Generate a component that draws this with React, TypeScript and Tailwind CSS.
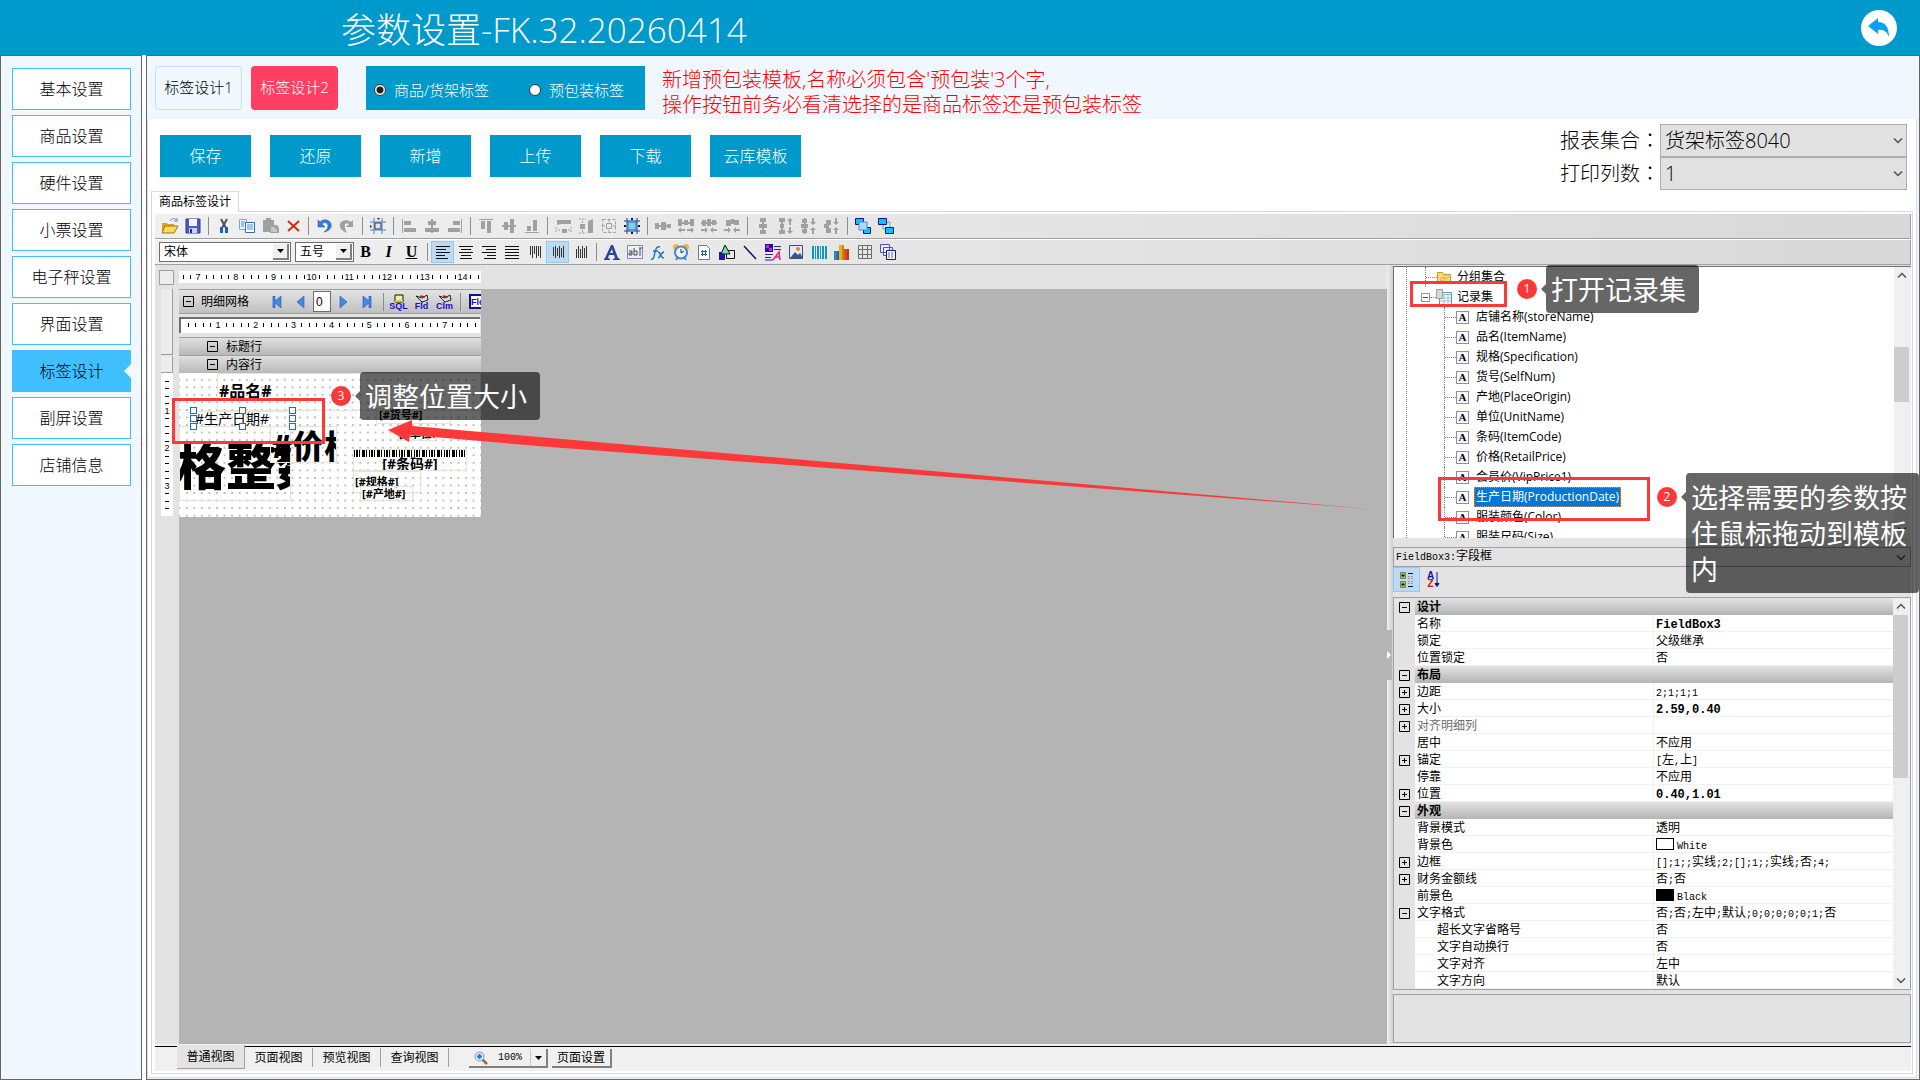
import { useState } from 'react';
import type { ReactNode } from 'react';

const menuItems = [
  '基本设置',
  '商品设置',
  '硬件设置',
  '小票设置',
  '电子秤设置',
  '界面设置',
  '标签设计',
  '副屏设置',
  '店铺信息',
];

const actions = ['保存', '还原', '新增', '上传', '下载', '云库模板'];

const fields = [
  '店铺名称(storeName)',
  '品名(ItemName)',
  '规格(Specification)',
  '货号(SelfNum)',
  '产地(PlaceOrigin)',
  '单位(UnitName)',
  '条码(ItemCode)',
  '价格(RetailPrice)',
  '会员价(VipPrice1)',
  '生产日期(ProductionDate)',
  '服装颜色(Color)',
  '服装尺码(Size)',
];

type Prop = {
  name: string;
  value?: string;
  kind?: 'group' | 'child';
  box?: '+' | '-';
  bold?: boolean;
  muted?: boolean;
  swatch?: 'white' | 'black';
};

const properties: Prop[] = [
  { name: '设计', kind: 'group', box: '-' },
  { name: '名称', value: 'FieldBox3', bold: true },
  { name: '锁定', value: '父级继承' },
  { name: '位置锁定', value: '否' },
  { name: '布局', kind: 'group', box: '-' },
  { name: '边距', value: '2;1;1;1', box: '+' },
  { name: '大小', value: '2.59,0.40', box: '+', bold: true },
  { name: '对齐明细列', value: '', box: '+', muted: true },
  { name: '居中', value: '不应用' },
  { name: '锚定', value: '[左,上]', box: '+' },
  { name: '停靠', value: '不应用' },
  { name: '位置', value: '0.40,1.01', box: '+', bold: true },
  { name: '外观', kind: 'group', box: '-' },
  { name: '背景模式', value: '透明' },
  { name: '背景色', value: 'White', swatch: 'white' },
  { name: '边框', value: '[];1;;实线;2;[];1;;实线;否;4;', box: '+' },
  { name: '财务金额线', value: '否;否', box: '+' },
  { name: '前景色', value: 'Black', swatch: 'black' },
  { name: '文字格式', value: '否;否;左中;默认;0;0;0;0;0;1;否', box: '-' },
  { name: '超长文字省略号', value: '否', kind: 'child' },
  { name: '文字自动换行', value: '否', kind: 'child' },
  { name: '文字对齐', value: '左中', kind: 'child' },
  { name: '文字方向', value: '默认', kind: 'child' },
];

const G = '#a0a0a0';

// 18x18 toolbar glyphs
const icons: Record<string, ReactNode> = {
  open: (
    <>
      <path d="M1 6h5l1 1h6v9H1z" fill="#d9a520" />
      <path d="M1 16l3-7h13l-4 7z" fill="#ffd75e" stroke="#9a7418" />
      <path d="M9 4c2-3 5-3 6-1M16 1v3h-3" fill="none" stroke="#6f7fae" />
    </>
  ),
  save: (
    <>
      <path d="M2 2h14v14H2z" fill="#4a5cc8" stroke="#2c3a94" />
      <path d="M5 2h8v7H5z" fill="#f4f6ff" />
      <path d="M5 11h8v5H5z" fill="#cfd4ee" />
      <path d="M6 12h2v4H6z" fill="#26307c" />
    </>
  ),
  cut: (
    <>
      <path d="M6 2l5 9M12 2L7 11" stroke="#44506a" strokeWidth="2" />
      <path d="M5 10h3v6H5zM10 10h3v6h-3z" fill="#1c5fc0" />
    </>
  ),
  copy: (
    <>
      <path d="M1.500 2.500h7v10h-7z" fill="#eaf3ff" stroke="#7aa8dd" />
      <path d="M7.500 5.500h9v10h-9z" fill="#fff" stroke="#2d6fc0" />
      <path d="M9 8h6M9 10h6M9 12h6M3 5h4M3 7h3M3 9h3" stroke="#4b8ed8" />
    </>
  ),
  paste: (
    <>
      <path d="M2 3h3V1h5v2h3v5h3l2 3v5H9v-1H2z" fill={G} />
      <path d="M10 10h4v2h2v3h-6z" fill="#c8c8c8" />
    </>
  ),
  remove: <path d="M4 4l11 10M15 4L4 14" stroke="#d22a0c" strokeWidth="2" />,
  undo: <path d="M3 3v7h7L7 7c3-3 6-1 6 2s-2 4-4 6c5-1 8-4 7-8S9 1 5 5z" fill="#2f7fdc" stroke="#1c4fa0" strokeWidth=".5" />,
  redo: <path d="M15 3v7H8l3-3C8 5 6 7 7 10c0 2 1 4 2 6C4 14 1 11 2 7s7-5 11-2z" fill={G} />,
  frame: (
    <>
      <path d="M5 1v16M13 1v16M1 5h16M1 13h16" stroke="#4a83c4" />
      <path d="M6 6h6v6H6z" fill="#dce6f2" stroke="#303a55" />
      <path d="M8 1h3L9.500 3zM1 8l2 1.500L1 11z" fill="#222" />
    </>
  ),
  alignL: <path d="M2 2h1v14H2zM4 4h7v4H4zM4 11h12v4H4z" fill={G} />,
  alignC: <path d="M8 2h2v14H8zM5 4h8v4H5zM2 11h14v4H2z" fill={G} />,
  alignR: <path d="M15 2h1v14h-1zM7 4h7v4H7zM2 11h12v4H2z" fill={G} />,
  alignT: <path d="M2 2h14v1H2zM4 4h4v8H4zM10 4h4v12h-4z" fill={G} />,
  alignM: <path d="M2 8h14v2H2zM4 5h4v8H4zM10 2h4v14h-4z" fill={G} />,
  alignB: <path d="M2 15h14v1H2zM4 9h4v5H4zM10 3h4v11h-4z" fill={G} />,
  sameW: (
    <>
      <path d="M3 3h14v4H7l-4 1zM8 12h5v4H8z" fill={G} />
      <path d="M2 10v6M17 10v6M4 13h3M14 13h3" stroke={G} strokeDasharray="2 1" />
    </>
  ),
  sameH: (
    <>
      <path d="M11 4l5-2v14h-5zM3 7h5v5H3z" fill={G} />
      <path d="M2 2h7M2 16h7M5.500 4v2M5.500 13v2" stroke={G} strokeDasharray="2 1" />
    </>
  ),
  same: (
    <>
      <path d="M2.500 2.500h13v13h-13z" fill="none" stroke={G} strokeDasharray="3 2" />
      <path d="M6.500 6.500h5v5h-5zM9 2v3M9 13v3M2 9h3M13 9h3" fill="none" stroke={G} />
    </>
  ),
  fit: (
    <>
      <path d="M4 1v16M14 1v16M1 4h16M1 14h16" stroke="#1a3f9c" />
      <path d="M5 5h8v8H5z" fill="#7fd0f5" stroke="#2a6fc4" />
      <path d="M8 1h2v2H8zM8 15h2v2H8zM1 8h2v2H1zM15 8h2v2h-2z" fill="#111" />
    </>
  ),
  spH: <path d="M1 6h4v6H1zM7 5h5v8H7zM13 7h4v4h-4zM1 8h16v2H1z" fill={G} />,
  spHInc: <path d="M1 2h4v7H1zM7 3h4v5H7zM13 2h4v7h-4zM1 5h16v2H1zM1 13l3-3v2h4v2H4v2zM17 13l-3-3v2h-4v2h4v2z" fill={G} />,
  spHDec: <path d="M2 3h4v6H2zM7 2h4v7H7zM12 3h4v5h-4zM1 5h16v2H1zM8 13L5 10v2H1v2h4v2zM10 13l3-3v2h4v2h-4v2z" fill={G} />,
  spHNo: <path d="M3 3h5v6H3zM8 2h3v5H8zM11 3h5v5h-5zM8 13L5 10v2H1v2h4v2zM10 13l3-3v2h4v2h-4v2z" fill={G} />,
  spV: <path d="M6 1h6v4H6zM5 7h8v4H5zM6 13h6v4H6zM8 1h2v16H8z" fill={G} />,
  spVInc: <path d="M2 1h6v4H2zM3 7h4v4H3zM2 13h6v4H2zM4 1h2v16H4zM13 1l3 3h-2v4h-2V4h-2zM13 17l3-3h-2v-4h-2v4h-2z" fill={G} />,
  spVDec: <path d="M2 2h5v4H2zM1 7h7v4H1zM2 12h5v4H2zM4 1h2v16H4zM13 8l3-3h-2V1h-2v4h-2zM13 10l3 3h-2v4h-2v-4h-2z" fill={G} />,
  spVNo: <path d="M3 3h5v5H3zM1 7h5v4H1zM3 11h5v5H3zM13 8l3-3h-2V1h-2v4h-2zM13 10l3 3h-2v4h-2v-4h-2z" fill={G} />,
  front: (
    <>
      <path d="M1.500 1.500h8v6h-8zM9.500 10.500h7v6h-7z" fill="#00c8f8" stroke="#101090" />
      <path d="M5 5h8v8H5z" fill="#a8dcff" stroke="#4b8ed8" />
    </>
  ),
  back: (
    <>
      <path d="M6 5h7v7H6z" fill="#cfeaff" stroke="#7a9ac0" />
      <path d="M1.500 1.500h8v6h-8zM8.500 10.500h8v6h-8z" fill="#00c8f8" stroke="#101090" />
    </>
  ),
  linesL: <path d="M2 3h14v1H2zM2 6h10v1H2zM2 9h14v1H2zM2 12h9v1H2zM2 15h12v1H2z" fill="#111" />,
  linesC: <path d="M2 3h14v1H2zM4 6h10v1H4zM2 9h14v1H2zM4 12h10v1H4zM3 15h12v1H3z" fill="#111" />,
  linesR: <path d="M2 3h14v1H2zM6 6h10v1H6zM2 9h14v1H2zM7 12h9v1H7zM4 15h12v1H4z" fill="#111" />,
  linesJ: <path d="M2 3h14v1H2zM2 6h14v1H2zM2 9h14v1H2zM2 12h14v1H2zM2 15h14v1H2z" fill="#111" />,
  barsT: <path d="M4 3h1v9H4zM6 3h1v12H6zM8 3h1v8H8zM10 3h1v12h-1zM12 3h1v10h-1zM14 3h1v12h-1z" fill="#333" />,
  barsM: <path d="M4 4h1v9H4zM6 3h1v12H6zM8 5h1v8H8zM10 3h1v12h-1zM12 5h1v9h-1zM14 3h1v12h-1z" fill="#333" />,
  barsB: <path d="M4 6h1v9H4zM6 3h1v12H6zM8 6h1v9H8zM10 3h1v12h-1zM12 5h1v10h-1zM14 3h1v12h-1z" fill="#333" />,
  label: <path d="M1 16l1-1 6-13h2l5 13 2 1v1h-7v-1l2-1-1-3H6l-1 3 2 1v1H1zM7 10h3L9 6z" fill="#24479a" />,
  field: (
    <>
      <path d="M1.500 2.500h15v13h-15z" fill="#eef0f8" stroke="#7e8ab4" />
      <path d="M3 8h3v4H3v-2h3M8 5v7h3V8H8M14 5v8M13 5h3" fill="none" stroke="#445" />
    </>
  ),
  fx: (
    <path d="M2 16c3 1 3-3 4-7s2-6 5-5M4 8h5M9 9c3 0 2 6 6 6M15 9c-3 0-4 6-6 6" fill="none" stroke="#1778c8" strokeWidth="1.500" />
  ),
  clock: (
    <>
      <circle cx="4" cy="4" r="3" fill="#f2b52c" />
      <circle cx="14" cy="4" r="3" fill="#f2b52c" />
      <path d="M4 17l2-3M14 17l-2-3" stroke="#4b86c8" strokeWidth="2" />
      <circle cx="9" cy="9.500" r="6" fill="#e8f3ff" stroke="#4b86c8" strokeWidth="2" />
      <path d="M9 6v4l3-2" fill="none" stroke="#333" />
    </>
  ),
  page: (
    <>
      <path d="M3.500 2.500h8l3 3v11h-11z" fill="#fff" stroke="#6a78a8" />
      <path d="M7.500 7v6M10.500 7v6M6 8.500h6M6 11.500h6" stroke="#2d5fb0" />
    </>
  ),
  shapes: (
    <>
      <path d="M1 9h6v8H1z" fill="#2010c8" />
      <path d="M8.500 7.500h8v8h-8z" fill="none" stroke="#111" />
      <path d="M7 2l5 9H3z" fill="#70e0b0" stroke="#111" />
    </>
  ),
  line: <path d="M3 3l12 13" stroke="#10106a" strokeWidth="1.500" />,
  rtf: (
    <>
      <path d="M1 1h8v8H1z" fill="#2010a0" />
      <path d="M2 2h3v3H2zM5 5h3v3H5z" fill="#e020c0" />
      <path d="M10 3.500h7M10 6.500h7M1 11.500h8M1 14.500h6M1 17h8" stroke="#2a2a80" />
      <path d="M9 17l6-8 1 8M11 14h5" fill="none" stroke="#e0209a" strokeWidth="1.500" />
    </>
  ),
  image: (
    <>
      <path d="M2.500 2.500h13v13h-13z" fill="#dfeaff" stroke="#3b4a80" />
      <circle cx="11" cy="6" r="2" fill="#f07a28" />
      <path d="M3 15l5-6 3 3 2-2 3 5z" fill="#3c5488" />
    </>
  ),
  barcode: <path d="M2 3h2v13H2zM5 3h1v13H5zM7 3h2v13H7zM10 3h1v13h-1zM12 3h2v13h-2zM15 3h2v13h-2z" fill="#0e96c8" />,
  chart: (
    <>
      <path d="M1 8h5v9H1z" fill="#2d84cc" />
      <path d="M6 2h5v15H6z" fill="#f0ae18" />
      <path d="M11 6h5v11h-5z" fill="#e04a1c" />
      <path d="M9 2h2v15H9zM14 6h2v11h-2zM4 8h2v9H4z" fill="#0003" />
    </>
  ),
  grid: <path d="M2.500 2.500h13v13h-13zM6.500 2v14M11.500 2v14M2 6.500h14M2 11.500h14" fill="none" stroke="#6c6c6c" />,
  subs: (
    <>
      <path d="M1.500 1.500h9v8h-9zM4.500 4.500h9v8h-9z" fill="#eef" stroke="#4a5aa0" />
      <path d="M7.500 7.500h9v9h-9z" fill="#fff" stroke="#2010a0" />
      <path d="M9 10h6M9 12h6M9 14h6" stroke="#2d6fc0" strokeDasharray="2 1" />
    </>
  ),
};

function Icon({ name }: { name: string }) {
  return (
    <svg width="18" height="18" viewBox="0 0 18 18" fill="none" aria-hidden="true">
      {icons[name]}
    </svg>
  );
}

function ToolButton({ name, active }: { name: string; active?: boolean }) {
  return (
    <button
      type="button"
      aria-label={name}
      className={
        active
          ? 'flex h-[22px] w-[23px] items-center justify-center border border-[#90c8f6] bg-[#bcdaf2]'
          : 'flex h-[22px] w-[23px] items-center justify-center'
      }
    >
      <Icon name={name} />
    </button>
  );
}

function ToolGroup({ names, active = [] }: { names: string[]; active?: string[] }) {
  return (
    <div className="flex">
      {names.map((n) => (
        <ToolButton key={n} name={n} active={active.includes(n)} />
      ))}
    </div>
  );
}

function Separator() {
  return (
    <div className="flex w-2 shrink-0 justify-center">
      <div className="h-[18px] w-px bg-[#8c8c8c]" />
    </div>
  );
}

const mainGroups = [
  ['open', 'save'],
  ['cut', 'copy', 'paste', 'remove'],
  ['undo', 'redo'],
  ['frame'],
  ['alignL', 'alignC', 'alignR'],
  ['alignT', 'alignM', 'alignB'],
  ['sameW', 'sameH', 'same', 'fit'],
  ['spH', 'spHInc', 'spHDec', 'spHNo'],
  ['spV', 'spVInc', 'spVDec', 'spVNo'],
  ['front', 'back'],
];

function ToolCombo({ label, options, className }: { label: string; options: string[]; className: string }) {
  return (
    <div className={`relative h-5 border border-[#6e6e6e] bg-white ${className}`}>
      <select
        aria-label={label}
        className="block h-4 w-full appearance-none bg-white pl-1 font-['Noto_Sans_CJK_SC',sans-serif] text-xs leading-4 text-black"
      >
        {options.map((o) => (
          <option key={o}>{o}</option>
        ))}
      </select>
      <span className="pointer-events-none absolute inset-y-px right-px flex w-4 items-center justify-center border-r-2 border-b-2 border-[#808080] bg-[#f0f0f0]">
        <svg width="7" height="4" viewBox="0 0 7 4" aria-hidden="true">
          <path d="M0 0h7L3.500 4z" fill="#000" />
        </svg>
      </span>
    </div>
  );
}

// SimSun look: full-width glyphs at 12px, Latin ones at half that width
function MixedText({ text, bold }: { text: string; bold?: boolean }) {
  if (bold) {
    return <span className="font-['Liberation_Mono',monospace] text-xs font-bold">{text}</span>;
  }
  return (
    <>
      {text.split(/([ -~]+)/).map((part, i) =>
        /^[ -~]+$/.test(part) ? (
          <span key={i} className="font-['Liberation_Mono',monospace] text-[10px]">
            {part}
          </span>
        ) : (
          part
        ),
      )}
    </>
  );
}

function BoxSign({ sign }: { sign: '+' | '-' }) {
  return (
    <svg width="11" height="11" viewBox="0 0 11 11" aria-hidden="true" className="shrink-0">
      <path d={sign === '+' ? 'M.5.5h10v10H.5zM3 5.500h5M5.500 3v5' : 'M.5.5h10v10H.5zM3 5.500h5'} fill="none" stroke="#000" />
    </svg>
  );
}

function Chevron({ up }: { up?: boolean }) {
  return (
    <svg width="10" height="7" viewBox="0 0 10 7" aria-hidden="true">
      <path d={up ? 'M1 5.500l4-4 4 4' : 'M1 1.500l4 4 4-4'} fill="none" stroke="#505050" strokeWidth="1.500" />
    </svg>
  );
}

function Ruler({ labels, offset }: { labels: number[]; offset: number }) {
  const unit = 37.8;
  const ticks = Array.from({ length: 44 }, (_, i) => i).filter((i) => i % 5 !== 0);
  return (
    <svg width="302" height="12" viewBox="0 0 302 12" className="block">
      {ticks.map((i) => (
        <path key={i} d={`M${Math.round(offset + ((i - 5) * unit) / 5) + 0.5} 4v4`} stroke="#000" />
      ))}
      {labels.map((n, i) => (
        <text key={n} x={offset + i * unit} y="9" fontSize="9" textAnchor="middle" fontFamily="Liberation Sans">
          {n}
        </text>
      ))}
    </svg>
  );
}

function VerticalRuler() {
  const ticks = [1, 2, 3, 4, 6, 7, 8, 9, 11, 12, 13, 14, 16, 17, 18];
  return (
    <svg width="12" height="143" viewBox="0 0 12 143" className="block bg-white">
      {ticks.map((i) => (
        <path key={i} d={`M4 ${Math.round(i * 7.5)}.5h4`} stroke="#000" />
      ))}
      {[1, 2, 3].map((n) => (
        <text key={n} x="6" y={n * 37.6 + 3} fontSize="9" textAnchor="middle" fontFamily="Liberation Sans">
          {n}
        </text>
      ))}
    </svg>
  );
}

function Badge({ n, className }: { n: number; className: string }) {
  return (
    <span
      className={`absolute flex size-5 items-center justify-center rounded-full bg-[#fd3838] text-xs text-white ${className}`}
    >
      {n}
    </span>
  );
}

function Callout({ text, className }: { text: string; className: string }) {
  return (
    <div className={`absolute rounded bg-black/60 px-[5px] pt-[7px] text-[27px] leading-9 text-white ${className}`}>
      <span className="absolute top-[19px] -left-[5px] border-y-[5px] border-r-[5px] border-y-transparent border-r-black/60" />
      {text}
    </div>
  );
}

function Band({ title }: { title: string }) {
  return (
    <div className="flex h-[18px] items-center gap-2 border-t border-[#a0a0a0] bg-linear-to-b from-[#e0e0e0] to-[#b8b8b8] pl-7 text-xs leading-4">
      <BoxSign sign="-" />
      {title}
    </div>
  );
}

function LabelCanvas() {
  const box = 'absolute overflow-hidden border border-[#e8e4d4] whitespace-nowrap';
  return (
    <div className="relative h-[144px] bg-white bg-[radial-gradient(circle,#b0b0b0_0.6px,transparent_1px)] bg-size-[7.55px_7.55px] bg-position-[4px_3px] text-black">
      <div className={`${box} top-0 left-[38px] h-[38px] w-[264px] pl-px text-base leading-[34px] font-bold`}>#品名#</div>
      <div className={`${box} top-[53px] left-0 h-[75px] w-[112px] -indent-1 text-[50px] leading-[78px] font-black`}>格整数</div>
      <div className={`${box} top-[53px] left-[91px] h-[37px] w-[67px] text-[32px] leading-[38px] font-black`}>#价格</div>
      <div className={`${box} top-[38px] left-[14px] h-4 w-[100px] pl-px text-sm leading-[14px]`}>#生产日期#</div>
      <div className={`${box} top-[35px] left-[197px] h-[16px] w-[75px] pl-[2px] text-[11px] leading-3 font-bold`}>[#货号#]</div>
      <div className={`${box} top-[54px] left-[219px] h-[14px] w-[38px] text-[11px] leading-3 font-bold`}>[#单位#]</div>
      <div className={`${box} top-[76px] left-[174px] h-[22px] w-[114px] text-center text-sm leading-4 font-bold`}>
        <div className="h-[7px] bg-[repeating-linear-gradient(90deg,#000_0_1px,#fff_1px_2px,#000_2px_4px,#fff_4px_5px,#000_5px_6px,#fff_6px_8px,#000_8px_11px,#fff_11px_12px,#000_12px_13px,#fff_13px_15px)]" />
        <div className="-mt-px">[#条码#]</div>
      </div>
      <div className={`${box} top-[98px] left-[174px] h-[22px] w-[68px] pl-px text-[11px] leading-5 font-bold`}>[#规格#]</div>
      <div className={`${box} top-[113px] left-[181px] h-[15px] w-[53px] pl-px text-[11px] leading-[13px] font-bold`}>[#产地#]</div>

      {/* Resize handles */}
      <svg width="107" height="24" viewBox="0 0 107 24" className="absolute top-[34px] left-[11px]" aria-hidden="true">
        {[0, 49, 99].flatMap((x) =>
          [0, 8, 16]
            .filter((y) => !(x === 49 && y === 8))
            .map((y) => (
              <rect key={`${x}-${y}`} x={x + 0.5} y={y + 0.5} width="6" height="6" fill="#fff" stroke="#0078d7" />
            )),
        )}
      </svg>

      <div className="absolute top-[25px] -left-[7px] h-[46px] w-[153px] border-[3px] border-[#fd3838]" />
      <Badge n={3} className="top-[13px] left-[152px]" />
      <Callout text="调整位置大小" className="-top-px left-[181px] h-12 w-[180px]" />
    </div>
  );
}

function NavArrow({ d }: { d: string }) {
  return (
    <button type="button" className="flex h-5 w-6 shrink-0 items-center justify-center">
      <svg width="10" height="12" viewBox="0 0 10 12" aria-hidden="true">
        <path d={d} fill="#3f8ae6" stroke="#1f56b0" strokeWidth=".6" />
      </svg>
    </button>
  );
}

function DbButton({ label }: { label: string }) {
  return (
    <button type="button" className="flex h-5 w-[23px] shrink-0 flex-col items-center justify-center">
      <svg width="14" height="9" viewBox="0 0 14 9" aria-hidden="true">
        {label === 'SQL' ? (
          <>
            <path d="M3 1h8v7H3z" fill="#f4f0a0" stroke="#111" />
            <path d="M3 6h8v2H3z" fill="#d8d020" />
          </>
        ) : (
          <>
            <path d="M1 2l6 2 5-3 1 5-6 2z" fill="#bfe8e0" stroke="#222" />
            <path d="M5 2l5 1" stroke="#c01818" strokeWidth="1.500" />
          </>
        )}
      </svg>
      <span className="font-['Liberation_Sans',sans-serif] text-[9px] leading-[7px] font-bold text-[#1010c0]">{label}</span>
    </button>
  );
}

function Designer() {
  return (
    <div className="w-[302px] shrink-0 self-start bg-[#e3e3e3]">
      <div className="flex h-[25px] items-center overflow-hidden border-y border-[#a0a0a0] bg-linear-to-b from-[#e3e3e3] to-[#c0c0c0] pl-1 text-xs leading-4">
        <BoxSign sign="-" />
        <span className="ml-[7px] w-[64px] shrink-0">明细网格</span>
        <NavArrow d="M1 0h2v5l6-5v12L3 7v5H1z" />
        <NavArrow d="M8 0v12L1 6z" />
        <input
          aria-label="记录"
          defaultValue="0"
          className="h-[21px] w-[18px] shrink-0 border border-[#6e6e6e] bg-white pl-[2px] font-['Liberation_Sans',sans-serif] text-xs"
        />
        <NavArrow d="M2 0v12l7-6z" />
        <NavArrow d="M9 0H7v5L1 0v12l6-5v5h2z" />
        <Separator />
        <DbButton label="SQL" />
        <DbButton label="Fld" />
        <DbButton label="Clm" />
        <Separator />
        <span className="ml-[5px] flex h-[15px] w-5 shrink-0 items-end border-2 border-[#10108c] bg-white font-['Liberation_Sans',sans-serif] text-[9px] leading-[9px] font-bold text-[#1010c0]">
          Fld
        </span>
      </div>
      <div className="mt-[3px] mr-px h-4 border-t-2 border-l-2 border-[#6e6e6e] bg-white">
        <div className="overflow-hidden">
          <Ruler labels={[1, 2, 3, 4, 5, 6, 7]} offset={37} />
        </div>
      </div>
      <div className="mt-1">
        <Band title="标题行" />
        <Band title="内容行" />
      </div>
      <LabelCanvas />
    </div>
  );
}

function Workspace() {
  return (
    <div className="flex min-w-0 flex-1 flex-col">
      <div className="flex h-6 items-center bg-[#e3e3e3] pl-1">
        <div className="size-[15px] border border-[#a0a0a0] bg-[#ececec]" />
        <div className="ml-[5px] h-3 overflow-hidden bg-white">
          <Ruler labels={[7, 8, 9, 10, 11, 12, 13, 14]} offset={19} />
        </div>
      </div>
      <div className="relative flex flex-1 bg-[#b4b4b4]">
        <div className="w-6 shrink-0 bg-[#e3e3e3] pl-[6px]">
          <div className="h-[66px] w-3 border-r border-b border-[#a0a0a0] bg-[#ececec]" />
          <div className="mt-px h-[17px] w-3 border-r border-b border-[#a0a0a0] bg-[#ececec]" />
          <VerticalRuler />
        </div>
        <Designer />

        {/* Drag arrow from the record set to the template */}
        <svg
          viewBox="0 0 983 90"
          preserveAspectRatio="none"
          className="pointer-events-none absolute top-[131px] left-[233px] h-[90px] w-[calc(100%-249px)]"
          aria-hidden="true"
        >
          <path d="M0 10L24 0v6l138 12L983 89 162 27 22 15l-1 7z" fill="#fd3838" />
        </svg>
      </div>
    </div>
  );
}

function Scrollbar({ thumb }: { thumb: string }) {
  return (
    <div className="flex w-[17px] shrink-0 flex-col bg-[#f0f0f0] pr-[2px]">
      <div className="flex h-[17px] items-center justify-center">
        <Chevron up />
      </div>
      <div className="flex-1">
        <div className={`bg-[#cdcdcd] ${thumb}`} />
      </div>
      <div className="flex h-[17px] items-center justify-center">
        <Chevron />
      </div>
    </div>
  );
}

function FieldTree() {
  const [selected, setSelected] = useState(9);
  return (
    <div className="mt-px flex h-[272px] overflow-hidden border-t border-l border-[#6e6e6e] bg-white text-xs">
      <ul className="ml-3 flex-1 border-l border-dotted border-[#808080]">
        <li className="ml-[18px] flex h-5 items-center border-l border-dotted border-[#808080]">
          <span className="w-[11px] border-t border-dotted border-[#808080]" />
          <svg width="14" height="14" viewBox="0 0 14 14" aria-hidden="true">
            <path d="M.5 2.500h5l1 2h7v9H.5z" fill="#ffd870" stroke="#c99a2c" />
            <path d="M4 8h3v3H4zM8 5h3v3H8z" fill="#fff" stroke="#e0a030" />
          </svg>
          <span className="ml-[6px]">分组集合</span>
        </li>
        <li className="ml-[14px] flex h-5 items-center">
          <svg width="9" height="9" viewBox="0 0 9 9" aria-hidden="true">
            <path d="M.5.5h8v8h-8z" fill="#fff" stroke="#919191" />
            <path d="M2 4.500h5" stroke="#3050a0" />
          </svg>
          <span className="w-[6px] border-t border-dotted border-[#808080]" />
          <svg width="16" height="16" viewBox="0 0 16 16" aria-hidden="true">
            <path d="M3.500 3.500h12v12h-12z" fill="#fff" stroke="#5a8fd0" />
            <path d="M4 5.500h11" stroke="#8cc88c" />
            <path d="M4 9h11M4 12h11M8 6v9M12 6v9" stroke="#8fc0ec" />
            <path d="M.5.5h6v9h-6z" fill="#d8d8d8" stroke="#a0a0a0" />
          </svg>
          <span className="ml-[5px]">记录集</span>
        </li>
        {fields.map((f, i) => (
          <li key={f} className="ml-[37px] flex h-5 items-center border-l border-dotted border-[#808080]">
            <span className="w-[11px] border-t border-dotted border-[#808080]" />
            <span className="flex size-[13px] items-center justify-center border border-[#8a8ac8] bg-white font-['Liberation_Serif',serif] text-[11px] leading-none font-bold text-black">
              A
            </span>
            <button
              type="button"
              onClick={() => setSelected(i)}
              className={
                i === selected
                  ? 'ml-[5px] h-5 border border-dotted border-[#ff8728] bg-[#0078d7] px-px leading-4 text-white'
                  : 'ml-[6px] h-5 px-px leading-4'
              }
            >
              {f}
            </button>
          </li>
        ))}
      </ul>
      <Scrollbar thumb="mt-[63px] h-[55px]" />
    </div>
  );
}

function PropertyGrid() {
  return (
    <div className="mt-[5px] flex border border-[#a0a0a0] bg-[#e3e3e3]">
      <div className="min-w-0 flex-1">
        <table className="w-full table-fixed border-separate border-spacing-0 text-xs">
          <colgroup>
            <col className="w-[21px]" />
            <col />
            <col />
          </colgroup>
          <tbody>
            {properties.map((p) => (
              <tr key={p.name}>
                <td className="h-[17px] p-0 pl-[5px]">
                  <div className="flex h-[17px] items-end pb-[2px]">{p.box && <BoxSign sign={p.box} />}</div>
                </td>
                {p.kind === 'group' ? (
                  <th
                    colSpan={2}
                    scope="colgroup"
                    className="h-[17px] bg-linear-to-b from-[#e3e3e3] to-[#b4b4b4] p-0 pl-[2px] text-left font-bold"
                  >
                    <div className="h-[17px] leading-[18px]">{p.name}</div>
                  </th>
                ) : (
                  <>
                    <th
                      scope="row"
                      className={`h-[17px] border-r border-b border-[#f0f0f0] bg-white p-0 text-left font-normal ${p.kind === 'child' ? 'pl-[22px]' : 'pl-[2px]'} ${p.muted ? 'text-[#6d6d6d]' : ''}`}
                    >
                      <div className="h-4 leading-[18px]">{p.name}</div>
                    </th>
                    <td className="h-[17px] border-b border-[#f0f0f0] bg-white p-0 pl-[2px]">
                      <div className="flex h-4 items-start leading-[18px] whitespace-nowrap">
                        {p.swatch && (
                          <span
                            className={
                              p.swatch === 'white'
                                ? 'mt-[2px] mr-[3px] h-3 w-[18px] border border-black bg-white'
                                : 'mt-[2px] mr-[3px] h-3 w-[18px] border border-black bg-black'
                            }
                          />
                        )}
                        <span>
                          <MixedText text={p.value ?? ''} bold={p.bold} />
                        </span>
                      </div>
                    </td>
                  </>
                )}
              </tr>
            ))}
          </tbody>
        </table>
      </div>
      <Scrollbar thumb="h-[163px]" />
    </div>
  );
}

function Inspector() {
  return (
    <aside className="relative flex w-[518px] shrink-0 flex-col bg-[#e3e3e3] pb-px">
      <FieldTree />

      <div className="mt-[9px] flex h-5 items-center justify-between border border-[#a0a0a0] pr-1 pl-[2px] text-xs leading-4">
        <span>
          <MixedText text="FieldBox3:字段框" />
        </span>
        <Chevron />
      </div>

      <div className="flex h-[25px] items-center">
        <button type="button" aria-label="分类" className="flex h-[25px] w-[27px] items-center justify-center border border-[#90c8f6] bg-[#bcdaf2]">
          <svg width="16" height="18" viewBox="0 0 16 18" aria-hidden="true">
            <path d="M1.500 1.500h5v6h-5zM1.500 10.500h5v6h-5z" fill="#9ac818" stroke="#7a7a7a" />
            <path d="M2.500 4.500h3M4 3v3M2.500 13.500h3M4 12v3M9 2.500h5M9 15.500h5" stroke="#111" />
            <path d="M9 5.500h6M9 7.500h6M9 10.500h6M9 12.500h6" stroke="#999" strokeDasharray="2 1" />
          </svg>
        </button>
        <button type="button" aria-label="排序" className="ml-[5px] flex h-[25px] w-[17px] items-center justify-center">
          <span className="flex flex-col font-['Liberation_Sans',sans-serif] text-[10px] leading-2 font-bold">
            <span className="text-[#1010a0]">A</span>
            <span className="text-[#c01818]">Z</span>
          </span>
          <svg width="6" height="16" viewBox="0 0 6 16" aria-hidden="true">
            <path d="M3 0v12M1 11.500h4l-2 3z" fill="#1010a0" stroke="#1010a0" />
          </svg>
        </button>
      </div>

      <PropertyGrid />
      <div className="mt-1 min-h-[49px] flex-1 border border-[#a0a0a0]" />

      {/* Annotations */}
      <div className="absolute top-4 left-[17px] h-[26px] w-[97px] border-[3px] border-[#fd3838]" />
      <Badge n={1} className="top-[14px] left-[124px]" />
      <Callout text="打开记录集" className="top-0 left-[153px] h-12 w-[153px]" />
      <div className="absolute top-[212px] left-[45px] h-[44px] w-[212px] border-[3px] border-[#fd3838]" />
      <Badge n={2} className="top-[222px] left-[264px]" />
      <Callout text="选择需要的参数按住鼠标拖动到模板内" className="top-[208px] left-[293px] h-[120px] w-[233px]" />
    </aside>
  );
}

function StatusBar() {
  const views = ['页面视图', '预览视图', '查询视图'];
  return (
    <div className="flex h-[27px] bg-[#f0f0f0] text-xs">
      <div className="mt-[2px] w-[22px] border-t border-black" />
      <button type="button" className="mt-px h-6 w-[68px] border-r border-b border-[#a0a0a0] bg-[#e3e3e3]">
        普通视图
      </button>
      <div className="mt-[2px] flex flex-1 items-start border-t border-black">
        {views.map((v) => (
          <button key={v} type="button" className="mt-px h-[19px] w-[68px] border-r border-[#a0a0a0]">
            {v}
          </button>
        ))}
        <div className="mt-[2px] ml-[20px] flex h-[19px] w-[79px] border-r-2 border-b-2 border-[#808080]">
          <button type="button" className="flex flex-1 items-center gap-[10px] pl-[5px]">
            <svg width="14" height="14" viewBox="0 0 14 14" aria-hidden="true">
              <path d="M8 8l5 5" stroke="#a06a38" strokeWidth="2.500" />
              <circle cx="5.500" cy="5.500" r="4.500" fill="#d8ecff" stroke="#8a9ab0" />
              <path d="M5.500 3v5M3 5.500h5" stroke="#1878d8" strokeWidth="2" />
            </svg>
            <MixedText text="100%" />
          </button>
          <button type="button" aria-label="缩放" className="flex w-4 items-center justify-center border-l border-[#c8c8c8]">
            <svg width="7" height="4" viewBox="0 0 7 4" aria-hidden="true">
              <path d="M0 0h7L3.500 4z" fill="#000" />
            </svg>
          </button>
        </div>
        <button type="button" className="mt-[2px] ml-1 h-[19px] w-[60px] border-r-2 border-b-2 border-[#808080]">
          页面设置
        </button>
      </div>
    </div>
  );
}

function PickerRow({ label, id, value }: { label: string; id: string; value: string }) {
  return (
    <div className="flex items-center">
      <label htmlFor={id} className="w-[100px] leading-7 whitespace-nowrap">
        {label}
        <span className="font-['Noto_Sans_CJK_TC',sans-serif]">：</span>
      </label>
      <div className="relative flex">
        <select
          id={id}
          className="h-[33px] w-[247px] appearance-none border border-[#adadad] bg-[#e1e1e1] pl-1 text-xl leading-7"
        >
          <option>{value}</option>
        </select>
        <span className="pointer-events-none absolute inset-y-0 right-1 flex items-center">
          <Chevron />
        </span>
      </div>
    </div>
  );
}

const radioClass =
  'size-3 appearance-none rounded-full border border-[#333] bg-white checked:bg-[radial-gradient(circle,#222_3px,#fff_4px)]';

export default function App() {
  const [active, setActive] = useState('标签设计');

  return (
    <div className="flex min-h-screen flex-col bg-white font-['Open_Sans','Noto_Sans_CJK_SC',sans-serif] text-black">
      {/* Header */}
      <header className="flex h-[55px] items-center justify-between bg-[#0099cc] pr-[23px] pl-[341px]">
        <h1 className="pt-1 text-[35px] leading-none font-light text-white">参数设置-FK.32.20260414</h1>
        <button type="button" aria-label="返回" className="flex size-9 items-center justify-center rounded-full bg-white">
          <svg width="22" height="20" viewBox="0 0 22 20" aria-hidden="true">
            <path d="M0 8L10 0v4c7 0 11 5 11 15-2-5-5-8-11-7v4z" fill="#0ba0f8" />
          </svg>
        </button>
      </header>

      <div className="flex flex-1 gap-1">
        {/* Side menu */}
        <nav className="flex w-[142px] shrink-0 flex-col gap-[5px] border border-[#666] bg-[#f0f7ff] px-[11px] pt-3">
          {menuItems.map((m) => (
            <button
              key={m}
              type="button"
              onClick={() => setActive(m)}
              className={
                m === active
                  ? 'relative h-[42px] w-[119px] bg-[#40bfff] text-base font-light'
                  : 'relative h-[42px] w-[119px] border border-[#40bfff] bg-white text-base font-light'
              }
            >
              {m}
              {m === active && (
                <span className="absolute top-[14px] right-0 border-y-[7px] border-r-[7px] border-y-transparent border-r-[#f0f7ff]" />
              )}
            </button>
          ))}
        </nav>

        <main className="flex min-w-0 flex-1 flex-col border border-[#666] bg-[#f0f7ff]">
          {/* Template kind */}
          <div className="flex h-[63px] items-start pt-[10px] pl-2 font-light">
            <button type="button" className="h-11 w-[87px] rounded-sm border border-[#c8dcff] pb-[2px] text-[15px]">
              标签设计1
            </button>
            <button type="button" className="ml-[9px] h-11 w-[87px] rounded-sm bg-[#fe3f62] pb-[2px] text-[15px] text-white">
              标签设计2
            </button>
            <div className="ml-7 flex h-11 w-[279px] items-center bg-[#0099cc] pt-1 pl-2 text-[15px] text-white">
              <label className="flex w-[155px] items-center gap-2">
                <input type="radio" name="kind" defaultChecked className={radioClass} />
                商品/货架标签
              </label>
              <label className="flex items-center gap-2">
                <input type="radio" name="kind" className={radioClass} />
                预包装标签
              </label>
            </div>
            <p className="ml-[17px] pt-px text-xl leading-[25px] text-[#ff0000]">
              新增预包装模板,名称必须包含'预包装'3个字,
              <br />
              操作按钮前务必看清选择的是商品标签还是预包装标签
            </p>
          </div>

          <div className="mr-[2px] mb-px flex flex-1 flex-col border-x border-b border-[#dcdcdc] bg-white">
            {/* Actions */}
            <div className="flex h-[72px] items-start justify-between pr-[9px] pl-3 font-light">
              <div className="flex gap-[19px] pt-4">
                {actions.map((a) => (
                  <button key={a} type="button" className="h-[42px] w-[91px] bg-[#0099cc] text-base text-white">
                    {a}
                  </button>
                ))}
              </div>
              <div className="pt-[5px] text-xl">
                <PickerRow id="report-set" label="报表集合" value="货架标签8040" />
                <PickerRow id="print-cols" label="打印列数" value="1" />
              </div>
            </div>

            {/* Design tab */}
            <div className="flex pl-[3px]">
              <button type="button" className="relative -mb-px h-[21px] w-[88px] border border-b-0 border-[#d9d9d9] bg-white text-xs">
                商品标签设计
              </button>
            </div>
            <section className="mx-[3px] mb-[3px] flex flex-1 flex-col border border-[#d9d9d9] pt-[2px] pr-px pb-[2px] pl-[3px]">
              <div className="flex h-[25px] items-center border-r border-b border-[#a0a0a0] bg-linear-to-r from-[#f0f0f0] to-[#d8d8d8] pl-[3px]">
                {mainGroups.map((g, i) => (
                  <div key={g[0]} className="flex items-center">
                    {i > 0 && <Separator />}
                    <ToolGroup names={g} />
                  </div>
                ))}
              </div>
              <div className="mt-px flex h-[25px] items-center border-r border-b border-[#a0a0a0] bg-linear-to-r from-[#f0f0f0] to-[#d8d8d8] pl-1">
                <ToolCombo label="字体" options={['宋体']} className="w-[132px]" />
                <ToolCombo label="字号" options={['五号']} className="ml-1 w-[59px]" />
                <div className="flex font-['Liberation_Serif',serif] text-base leading-none font-bold">
                  <button type="button" className="h-[22px] w-[23px]">B</button>
                  <button type="button" className="h-[22px] w-[23px] italic">I</button>
                  <button type="button" className="h-[22px] w-[23px] underline">U</button>
                </div>
                <Separator />
                <ToolGroup
                  names={['linesL', 'linesC', 'linesR', 'linesJ', 'barsT', 'barsM', 'barsB']}
                  active={['linesL', 'barsM']}
                />
                <Separator />
                <ToolGroup
                  names={['label', 'field', 'fx', 'clock', 'page', 'shapes', 'line', 'rtf', 'image', 'barcode', 'chart', 'grid', 'subs']}
                />
              </div>

              <div className="flex flex-1">
                <Workspace />
                <div className="flex w-[6px] shrink-0 items-center bg-linear-to-r from-[#f0f0f0] to-[#cfcfcf]">
                  <div className="flex h-[50px] w-[5px] items-center bg-[#b4b4b4]">
                    <svg width="4" height="8" viewBox="0 0 4 8" aria-hidden="true">
                      <path d="M0 0l4 4-4 4z" fill="#fff" />
                    </svg>
                  </div>
                </div>
                <Inspector />
              </div>

              <StatusBar />
            </section>
          </div>
        </main>
      </div>
    </div>
  );
}
